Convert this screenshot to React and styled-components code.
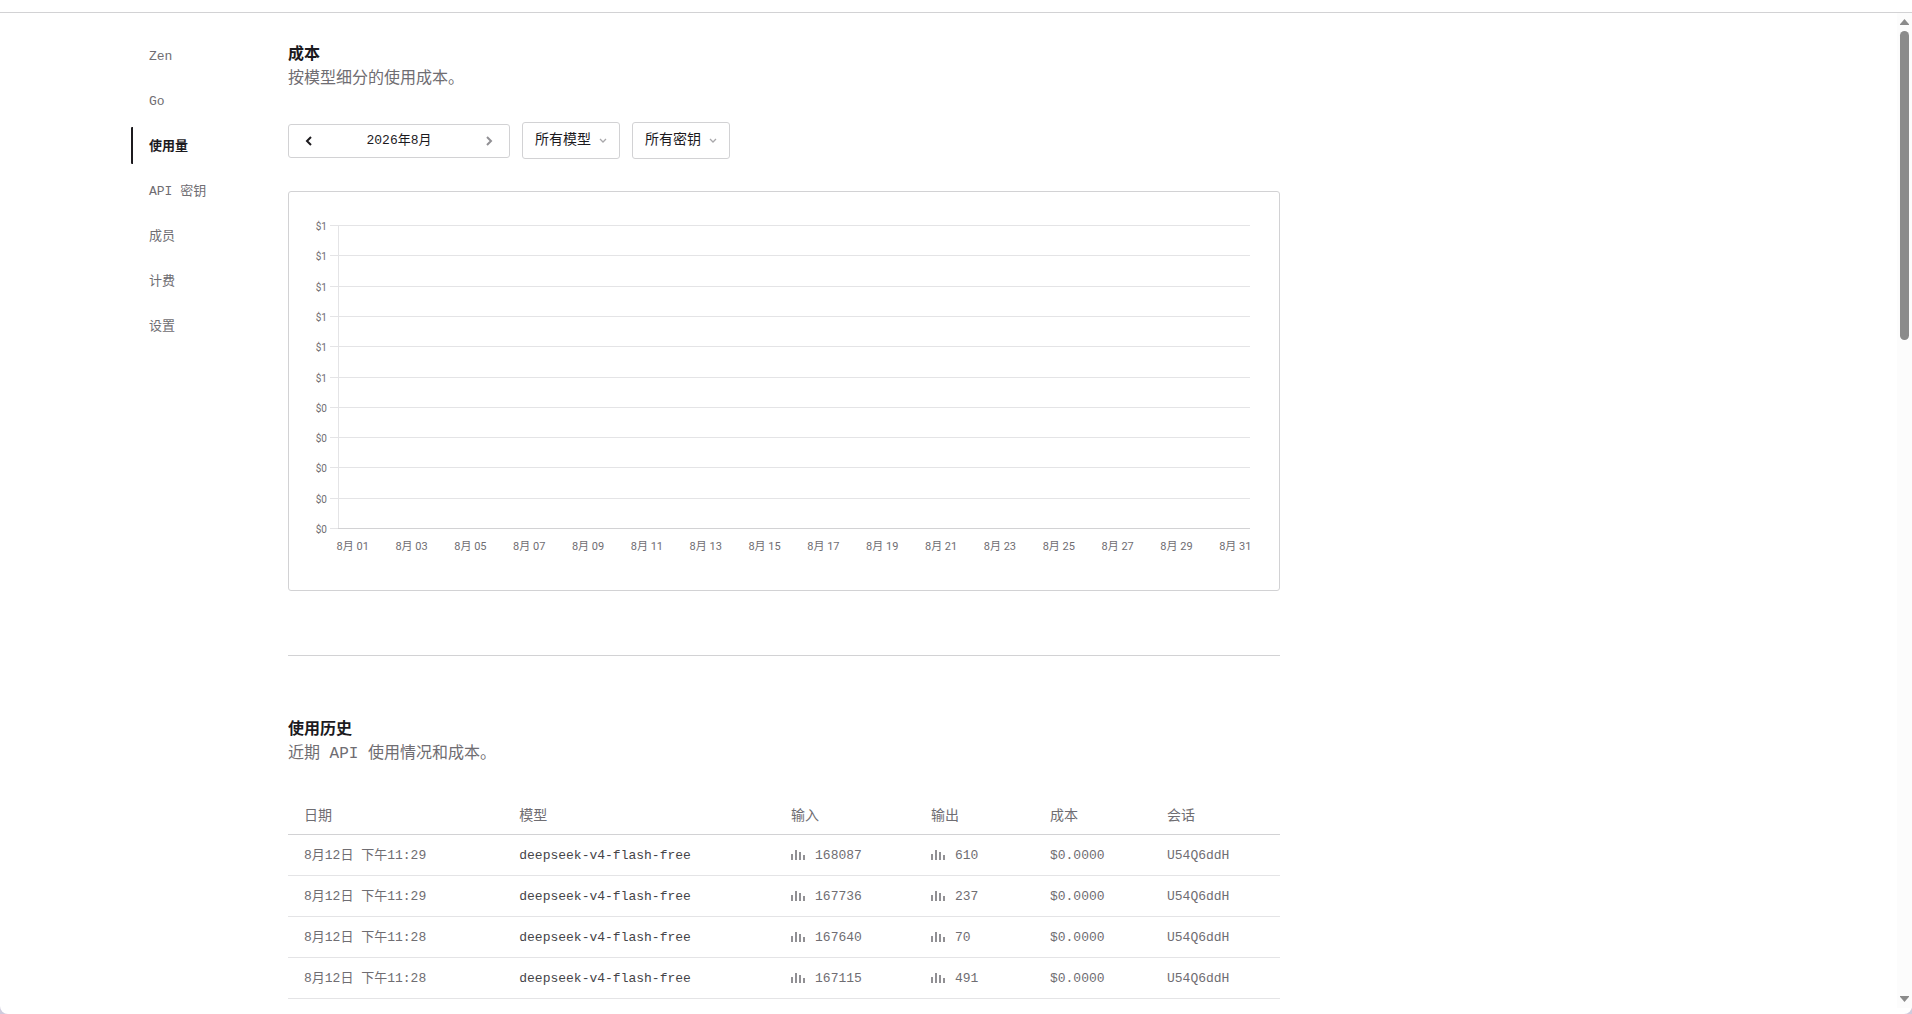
import React from "react";
import styled, { createGlobalStyle } from "styled-components";

const c = {
  text: "#1c1a1e",
  textModel: "#454448",
  textMuted: "#6f6d72",
  icon: "#919094",
  caret: "#a9a8ab",
  border: "#d2d2d4",
  borderMuted: "#e4e4e6",
  frame: "#cfcbdd",
};

const navItems = ["Zen", "Go", "使用量", "API 密钥", "成员", "计费", "设置"];
const activeItem = "使用量";

const columns = [
  { title: "日期", width: "21.7%" },
  { title: "模型", width: "27.4%" },
  { title: "输入", width: "14.1%" },
  { title: "输出", width: "12%" },
  { title: "成本", width: "11.8%" },
  { title: "会话", width: "13%" },
];

const usage = [
  { date: "8月12日 下午11:29", input: 168087, output: 610 },
  { date: "8月12日 下午11:29", input: 167736, output: 237 },
  { date: "8月12日 下午11:28", input: 167640, output: 70 },
  { date: "8月12日 下午11:28", input: 167115, output: 491 },
];

const GlobalStyle = createGlobalStyle`
  *, *::before, *::after {
    box-sizing: border-box;
  }

  body {
    margin: 0;
    background: ${c.frame};
    color: ${c.text};
    font-family: "Liberation Mono", "Noto Sans CJK SC", monospace;
    font-size: 13px;
    line-height: 21px;
  }

  h2, p {
    margin: 0;
  }
`;

const BarsIcon = () => (
  <svg width="14" height="14" viewBox="0 0 14 14" fill={c.icon} aria-hidden="true">
    <rect x="0" y="6" width="2" height="6" />
    <rect x="4" y="2" width="2" height="10" />
    <rect x="8" y="4" width="2" height="8" />
    <rect x="12" y="7" width="2" height="5" />
  </svg>
);

const Chevron = ({ d, size, color, width }) => (
  <svg
    width={size}
    height={size}
    viewBox={`0 0 ${size} ${size}`}
    fill="none"
    stroke={color}
    strokeWidth={width}
    aria-hidden="true"
  >
    <path d={d} />
  </svg>
);

const Filter = ({ label }) => (
  <FilterBox>
    <FilterSelect aria-label={label}>
      <option>{label}</option>
    </FilterSelect>
    <Chevron d="M3 4l3 3 3-3" size={12} color={c.caret} width={1.3} />
  </FilterBox>
);

/* CostChart
 *
 * CostChart draws the empty monthly cost chart, with a label for every second day.
 */

const chart = { left: 25, right: 937, top: 9, bottom: 312 };

const CostChart = () => {
  const step = (chart.bottom - chart.top) / 10;
  const dayWidth = (chart.right - chart.left) / 31;

  return (
    <ChartBox>
      <ChartSvg viewBox="0 0 942 350" role="img" aria-label="成本">
        {Array.from({ length: 11 }, (_, i) => {
          const y = Math.round(chart.top + i * step);
          return (
            <React.Fragment key={i}>
              <GridLine d={`M17 ${y + 0.5}H${chart.right}`} />
              <ChartLabel x="14" y={y + 5} textAnchor="end" $size={10}>
                {i < 6 ? "$1" : "$0"}
              </ChartLabel>
            </React.Fragment>
          );
        })}
        <GridLine d={`M${chart.left + 0.5} ${chart.top}V${chart.bottom}`} />
        <AxisLine d={`M${chart.left} ${chart.bottom + 0.5}H${chart.right}`} />
        {Array.from({ length: 16 }, (_, i) => (
          <ChartLabel
            key={i}
            x={chart.left + dayWidth * (i * 2 + 0.5)}
            y={chart.bottom + 22}
            textAnchor="middle"
            $size={11}
          >
            {`8月 ${String(i * 2 + 1).padStart(2, "0")}`}
          </ChartLabel>
        ))}
      </ChartSvg>
    </ChartBox>
  );
};

const UsageTable = () => (
  <Table>
    <colgroup>
      {columns.map((column) => (
        <Col key={column.title} $width={column.width} />
      ))}
    </colgroup>
    <thead>
      <tr>
        {columns.map((column) => (
          <HeadCell key={column.title}>{column.title}</HeadCell>
        ))}
      </tr>
    </thead>
    <tbody>
      {usage.map((row) => (
        <tr key={row.input}>
          <Cell>{row.date}</Cell>
          <Cell $color={c.textModel}>deepseek-v4-flash-free</Cell>
          <Cell>
            <Tokens>
              <BarsIcon />
              {row.input}
            </Tokens>
          </Cell>
          <Cell>
            <Tokens>
              <BarsIcon />
              {row.output}
            </Tokens>
          </Cell>
          <Cell>$0.0000</Cell>
          <Cell>U54Q6ddH</Cell>
        </tr>
      ))}
    </tbody>
  </Table>
);

const App = () => (
  <>
    <GlobalStyle />
    <Window>
      <TopBar />
      <Body>
        <Content>
          <Sidebar>
            {navItems.map((item) => (
              <NavLink key={item} href="#" $active={item === activeItem}>
                {item}
              </NavLink>
            ))}
          </Sidebar>
          <Main>
            <section>
              <Title>成本</Title>
              <Subtitle>按模型细分的使用成本。</Subtitle>
              <Filters>
                <MonthPicker>
                  <IconButton aria-label="上个月">
                    <Chevron d="M10 4L6 8l4 4" size={16} color={c.text} width={2} />
                  </IconButton>
                  2026年8月
                  <IconButton aria-label="下个月" disabled>
                    <Chevron d="M6 4l4 4-4 4" size={16} color={c.icon} width={2} />
                  </IconButton>
                </MonthPicker>
                <Filter label="所有模型" />
                <Filter label="所有密钥" />
              </Filters>
              <CostChart />
            </section>
            <Divider />
            <section>
              <Title>使用历史</Title>
              <Subtitle>近期 API 使用情况和成本。</Subtitle>
              <UsageTable />
            </section>
          </Main>
        </Content>
        <Scrollbar aria-hidden="true">
          <svg width="9" height="6" viewBox="0 0 9 6" fill="#8b8b8b">
            <path d="M4.5 0L9 5.2V6H0V5.2z" />
          </svg>
          <Thumb />
          <svg width="9" height="6" viewBox="0 0 9 6" fill="#8b8b8b">
            <path d="M4.5 6L9 .8V0H0V.8z" />
          </svg>
        </Scrollbar>
      </Body>
    </Window>
  </>
);

const Window = styled.div`
  display: flex;
  flex-direction: column;
  height: 100vh;
  background: #fff;
  border-radius: 0 0 8px 8px;
  overflow: hidden;
`;

const TopBar = styled.header`
  flex: none;
  height: 13px;
  border-bottom: 1px solid ${c.border};
`;

const Body = styled.div`
  flex: 1;
  min-height: 0;
  display: flex;
`;

const Content = styled.div`
  flex: 1;
  min-width: 0;
  display: flex;
  padding: 24px 24px 0 131px;
  overflow: hidden;
`;

const Sidebar = styled.nav`
  flex: none;
  width: 157px;
  display: flex;
  flex-direction: column;
  align-items: flex-start;
  gap: 8px;
`;

const NavLink = styled.a`
  padding: 9px 16px 7px;
  border-left: 2px solid ${({ $active }) => ($active ? c.text : "transparent")};
  border-radius: 1px;
  color: ${({ $active }) => ($active ? c.text : c.textMuted)};
  font-weight: ${({ $active }) => ($active ? 700 : 400)};
  text-decoration: none;
`;

const Main = styled.main`
  flex: 1;
  min-width: 0;
  max-width: 992px;
  padding-top: 6px;
`;

const Title = styled.h2`
  font-size: 16px;
  font-weight: 700;
  line-height: 24px;
`;

const Subtitle = styled.p`
  color: ${c.textMuted};
  font-size: 16px;
  line-height: 24px;
  margin-bottom: 31px;
`;

const Filters = styled.div`
  display: flex;
  align-items: center;
  gap: 12px;
  margin-bottom: 32px;
`;

const MonthPicker = styled.div`
  display: flex;
  align-items: center;
  justify-content: space-between;
  width: 222px;
  height: 34px;
  padding: 0 12px;
  border: 1px solid ${c.border};
  border-radius: 3px;
`;

const IconButton = styled.button`
  display: flex;
  padding: 0;
  border: 0;
  background: none;
`;

const FilterBox = styled.div`
  display: flex;
  align-items: center;
  gap: 6px;
  height: 37px;
  padding: 0 10px 0 12px;
  border: 1px solid ${c.border};
  border-radius: 3px;
`;

const FilterSelect = styled.select`
  appearance: none;
  padding: 0;
  border: 0;
  background: none;
  color: inherit;
  font: inherit;
  font-size: 14px;
`;

const ChartBox = styled.div`
  padding: 24px;
  border: 1px solid ${c.border};
  border-radius: 3px;
`;

const ChartSvg = styled.svg`
  display: block;
  width: 100%;
`;

const GridLine = styled.path`
  stroke: ${c.borderMuted};
`;

const AxisLine = styled.path`
  stroke: ${c.border};
`;

const ChartLabel = styled.text`
  fill: ${c.textMuted};
  font-family: Roboto, "Noto Sans CJK SC", sans-serif;
  font-size: ${({ $size }) => $size}px;
`;

const Divider = styled.hr`
  height: 1px;
  margin: 64px 0 62px;
  border: 0;
  background: ${c.border};
`;

const Table = styled.table`
  width: 100%;
  table-layout: fixed;
  border-collapse: separate;
  border-spacing: 0;
  text-align: left;
`;

const Col = styled.col`
  width: ${({ $width }) => $width};
`;

const HeadCell = styled.th`
  height: 38px;
  padding: 2px 16px 0;
  border-bottom: 1px solid ${c.border};
  color: ${c.textMuted};
  font-size: 14px;
  font-weight: 400;
`;

const Cell = styled.td`
  height: 41px;
  padding: 0 16px;
  border-bottom: 1px solid ${c.borderMuted};
  color: ${({ $color }) => $color || c.textMuted};
  white-space: nowrap;
`;

const Tokens = styled.span`
  display: flex;
  align-items: center;
  gap: 10px;
`;

const Scrollbar = styled.div`
  flex: none;
  display: flex;
  flex-direction: column;
  align-items: center;
  gap: 6px;
  width: 15px;
  margin-bottom: 6px;
  padding: 6px 0;
  background: #fcfcfc;
`;

const Thumb = styled.div`
  flex: 1;
  width: 9px;

  &::before {
    content: "";
    display: block;
    height: 32.2%;
    border-radius: 5px;
    background: #8b8b8b;
  }
`;

export default App;
